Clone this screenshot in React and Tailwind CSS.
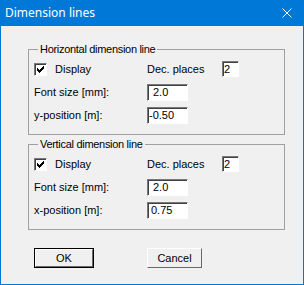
import React from 'react';

const sunken = 'bg-white border-t border-l border-[#7a7a7a] border-b border-r border-b-white border-r-white shadow-[inset_1px_1px_0_#404040]';

const Check = () => (
  <div className={`w-[13px] h-[13px] ${sunken} flex items-center justify-center`}>
    <svg width="9" height="9" viewBox="0 0 9 9">
      <path d="M1.5 3.5 L3.5 5.5 L7.5 1.5 M1.5 4.5 L3.5 6.5 L7.5 2.5 M1.5 5.5 L3.5 7.5 L7.5 3.5" stroke="#000" strokeWidth="1" fill="none" shapeRendering="crispEdges" />
    </svg>
  </div>
);

const Field = ({ value, pad = 'pl-[3px]' }) => (
  <div className={`w-[41px] h-[17px] ${sunken} ${pad} flex items-center leading-none`}>{value}</div>
);

const Group = ({ title, posLabel, posValue, posPad }) => (
  <fieldset className="ml-[27px] w-[257px] border border-[#a0a0a0] px-[5px] pb-[10px] pt-[5px]">
    <legend className="ml-[4px] px-[2px] leading-[14px] tracking-[-0.3px]">{title}</legend>
    <div className="flex items-center h-[16px]">
      <div className="w-[113px] flex items-center">
        <Check />
        <span className="ml-[8px]">Display</span>
      </div>
      <span className="w-[75px]">Dec. places</span>
      <div className={`w-[17px] h-[16px] ${sunken} pl-[1px] flex items-center`}>2</div>
    </div>
    <div className="flex items-center mt-[7px]">
      <span className="w-[113px]">Font size [mm]:</span>
      <Field value="2.0" pad="pl-[5px]" />
    </div>
    <div className="flex items-center mt-[6px]">
      <span className="w-[113px]">{posLabel}</span>
      <Field value={posValue} pad={posPad} />
    </div>
  </fieldset>
);

const App = () => {
  return (
    <div className="w-[304px] h-[285px] bg-[#0078d7] flex flex-col px-[1px] pb-[1px] text-[11px] text-black" style={{ fontFamily: '"Liberation Sans", Arial, sans-serif' }}>
      <div className="h-[26px] flex items-center justify-between pl-[4px] pr-[11px] text-white text-[12px]" style={{ fontFamily: '"Noto Sans", "Open Sans", sans-serif' }}>
        <span>Dimension lines</span>
        <svg width="10" height="10" viewBox="0 0 10 10">
          <path d="M0.5 0.5 L9.5 9.5 M9.5 0.5 L0.5 9.5" stroke="#fff" strokeWidth="1" />
        </svg>
      </div>
      <div className="flex-1 bg-[#f0f0f0] pt-[16px]">
        <Group title="Horizontal dimension line" posLabel="y-position [m]:" posValue="-0.50" posPad="pl-[1px]" />
        <div className="h-[2px]" />
        <Group title="Vertical dimension line" posLabel="x-position [m]:" posValue="0.75" posPad="pl-[3px]" />
        <div className="flex mt-[18px] ml-[33px] gap-[53px]">
          <button className="w-[60px] h-[20px] border border-black bg-[#f0f0f0] flex">
            <span className="flex-1 flex items-center justify-center border-t border-l border-t-white border-l-white border-b border-r border-b-[#696969] border-r-[#696969]">OK</span>
          </button>
          <button className="w-[55px] h-[20px] bg-[#f0f0f0] border-t border-l border-t-white border-l-white border-b border-r border-b-[#696969] border-r-[#696969] flex items-center justify-center">Cancel</button>
        </div>
      </div>
    </div>
  );
};

export default App;
